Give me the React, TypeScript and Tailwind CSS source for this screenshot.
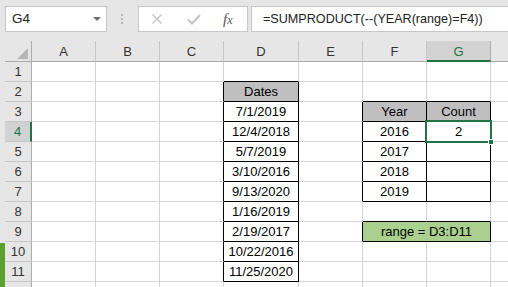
import React from "react";

const COLS = ["A", "B", "C", "D", "E", "F", "G", "H"];
const ROWS = [1, 2, 3, 4, 5, 6, 7, 8, 9, 10, 11, 12];

const DATES: Record<number, string> = {
  3: "7/1/2019",
  4: "12/4/2018",
  5: "5/7/2019",
  6: "3/10/2016",
  7: "9/13/2020",
  8: "1/16/2019",
  9: "2/19/2017",
  10: "10/22/2016",
  11: "11/25/2020",
};
const YEARS: Record<number, string> = { 4: "2016", 5: "2017", 6: "2018", 7: "2019" };

function cellInfo(r: number, c: number) {
  let text = "";
  let bg = "white";
  if (c === 3 && r === 2) {
    text = "Dates";
    bg = "gray";
  }
  if (c === 3 && DATES[r]) text = DATES[r];
  if (r === 3 && c === 5) {
    text = "Year";
    bg = "gray";
  }
  if (r === 3 && c === 6) {
    text = "Count";
    bg = "gray";
  }
  if (c === 5 && YEARS[r]) text = YEARS[r];
  if (c === 6 && r === 4) text = "2";
  const rightBlack =
    ((c === 2 || c === 3) && r >= 2 && r <= 11) ||
    ((c === 4 || c === 5 || c === 6) && r >= 3 && r <= 7) ||
    (c === 4 && r === 9);
  const bottomBlack =
    (c === 3 && r >= 1 && r <= 11) || ((c === 5 || c === 6) && r >= 2 && r <= 8);
  return { text, bg, rightBlack, bottomBlack };
}

function Cell({ r, c }: { r: number; c: number }) {
  if (r === 9 && c === 6) return null;
  if (r === 9 && c === 5) {
    return (
      <div className="col-span-2 flex items-center justify-center border-r border-b border-r-black border-b-black bg-[#a9d08e] pt-[1px] text-[13px] text-black">
        range = D3:D11
      </div>
    );
  }
  const { text, bg, rightBlack, bottomBlack } = cellInfo(r, c);
  const selected = r === 4 && c === 6;
  return (
    <div
      className={
        "flex items-center justify-center border-r border-b pt-[1px] text-[13px] text-black " +
        (selected ? "relative z-10 " : "") +
        (rightBlack ? "border-r-black " : "border-r-[#d4d4d4] ") +
        (bottomBlack ? "border-b-black " : "border-b-[#d4d4d4] ") +
        (bg === "gray" ? "bg-[#bfbfbf]" : "bg-white")
      }
    >
      {text}
      {selected && (
        <div className="pointer-events-none absolute left-[-2px] top-[-2px] right-[-2px] bottom-[-2px] border-2 border-[#217346]">
          <div className="absolute right-[-4px] bottom-[-4px] h-[6px] w-[6px] border border-white bg-[#217346]" />
        </div>
      )}
    </div>
  );
}

export default function App() {
  return (
    <div className="h-[287px] w-[508px] overflow-hidden bg-[#e6e6e6] font-['Liberation_Sans',Arial,sans-serif]">
      {/* toolbar */}
      <div className="flex h-[41px] items-start pl-[5px] pt-[6px]">
        <div className="flex h-[26px] w-[102px] shrink-0 items-center justify-between border border-[#c6c6c6] bg-white pl-[6px] pr-[5px] text-[13.5px] text-[#222]">
          <span>G4</span>
          <svg width="8" height="4" viewBox="0 0 8 4">
            <polygon points="0,0 8,0 4,4" fill="#6d6d6d" />
          </svg>
        </div>
        <div className="ml-[14px] mt-[8px] flex w-[2px] shrink-0 flex-col gap-[2px]">
          <div className="h-[2px] w-[2px] bg-[#b5b5b5]" />
          <div className="h-[2px] w-[2px] bg-[#b5b5b5]" />
          <div className="h-[2px] w-[2px] bg-[#b5b5b5]" />
        </div>
        <div className="ml-[15px] flex h-[26px] w-[110px] shrink-0 items-center border border-[#c6c6c6] bg-white pl-[12px]">
          <svg width="12" height="10" viewBox="0 0 12 10">
            <path d="M1.5 0.5 L10.5 9.5 M10.5 0.5 L1.5 9.5" stroke="#c3c3c3" strokeWidth="1.4" fill="none" />
          </svg>
          <svg className="ml-[24px]" width="14" height="11" viewBox="0 0 14 11">
            <path d="M1 5.5 L5 9.5 L13 1" stroke="#c3c3c3" strokeWidth="2" fill="none" />
          </svg>
          <span className="ml-[22px] font-['Liberation_Serif',serif] text-[15px] italic leading-none text-[#555]">
            f<span className="text-[12px]">x</span>
          </span>
        </div>
        <div className="ml-[3px] flex h-[26px] flex-1 items-center border border-r-0 border-[#c6c6c6] bg-white pl-[11px] text-[12.6px] whitespace-nowrap text-[#222]">
          =SUMPRODUCT(--(YEAR(range)=F4))
        </div>
      </div>

      {/* sheet */}
      <div className="flex">
        <div className="flex h-[246px] w-[5px] shrink-0 flex-col">
          <div className="h-[202px] bg-[#e6e6e6]" />
          <div className="flex-1 bg-[#5ba02e]" />
        </div>
        <div className="grid grid-cols-[27px_64px_64px_64px_75px_64px_64px_64px_64px] grid-rows-[21px_repeat(12,20px)]">
          {/* corner */}
          <div className="flex items-end justify-end border-r border-b border-r-[#ababab] border-b-[#ababab] bg-[#e6e6e6] pr-[3px] pb-[2px]">
            <svg width="11" height="11" viewBox="0 0 11 11">
              <polygon points="11,0 11,11 0,11" fill="#b7b7b7" />
            </svg>
          </div>
          {COLS.map((c, i) =>
            i === 6 ? (
              <div
                key={c}
                className="flex items-center justify-center border-r border-b-2 border-r-[#ababab] border-b-[#217346] bg-[#d2d2d2] pt-[2px] text-[13px] text-[#217346]"
              >
                {c}
              </div>
            ) : (
              <div
                key={c}
                className="flex items-center justify-center border-r border-b border-r-[#c6c6c6] border-b-[#ababab] bg-[#e6e6e6] pt-[1px] text-[13px] text-[#333]"
              >
                {i === 7 ? "" : c}
              </div>
            )
          )}
          {ROWS.map((r) => (
            <React.Fragment key={r}>
              {r === 4 ? (
                <div className="flex items-center justify-center border-r-2 border-b border-r-[#217346] border-b-[#c6c6c6] bg-[#d2d2d2] pt-[1px] text-[13px] text-[#217346]">
                  {r}
                </div>
              ) : (
                <div className="flex items-center justify-center border-r border-b border-r-[#ababab] border-b-[#c6c6c6] bg-[#e6e6e6] pt-[1px] text-[13px] text-[#333]">
                  {r === 12 ? "" : r}
                </div>
              )}
              {COLS.map((_, c) => (
                <Cell key={c} r={r} c={c} />
              ))}
            </React.Fragment>
          ))}
        </div>
      </div>
    </div>
  );
}
